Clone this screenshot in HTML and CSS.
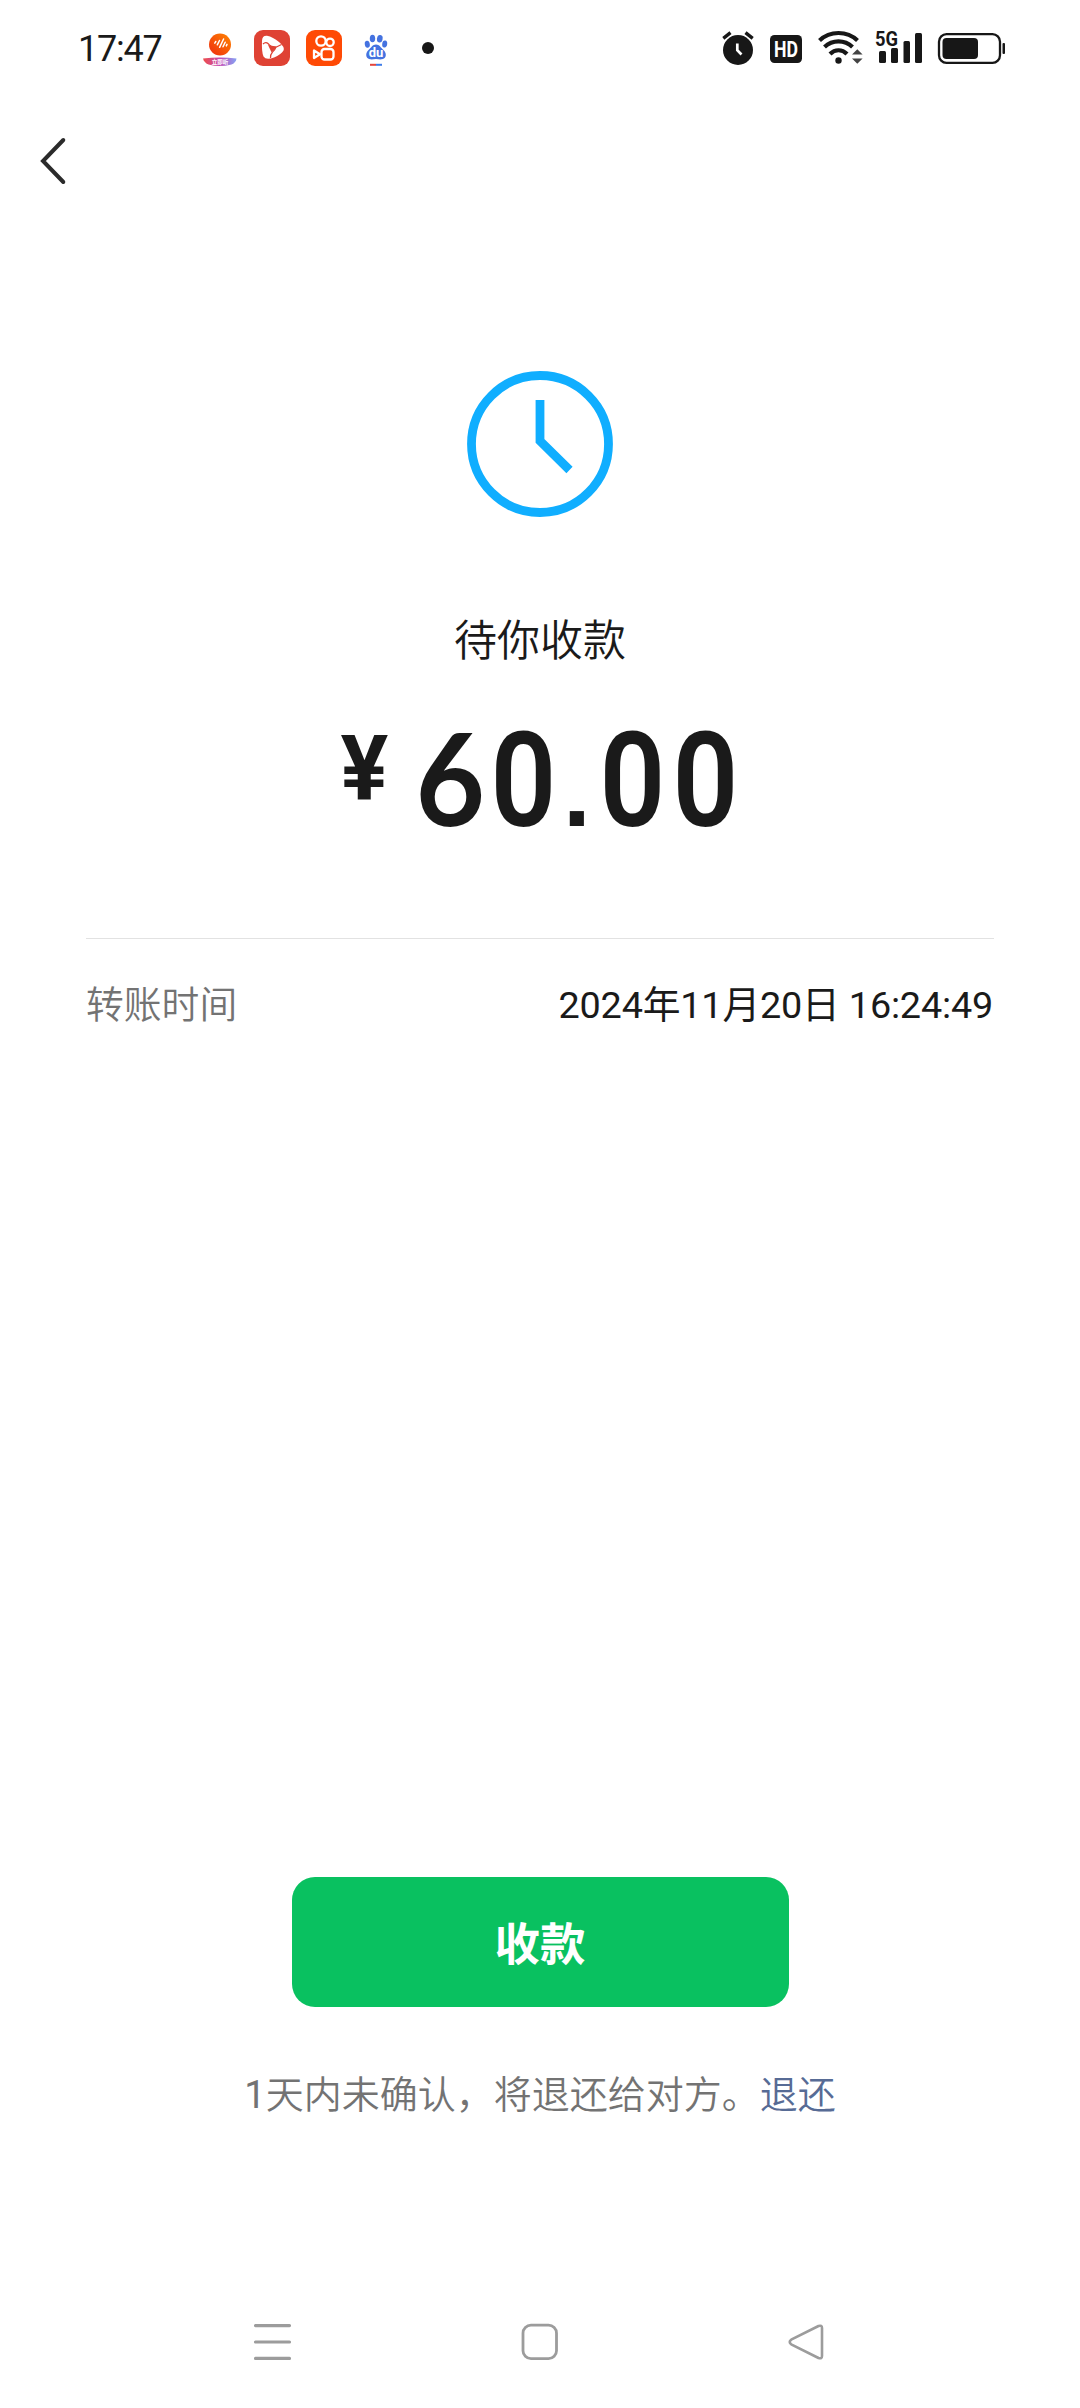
FILE: index.html
```html
<!DOCTYPE html>
<html lang="zh-CN">
<head>
<meta charset="utf-8">
<title>待你收款</title>
<link rel="stylesheet" href="styles.css">
</head>
<body>
<div class="screen">
  <header class="status">
    <div class="status-left">
      <span class="time">17:47</span>
      <div class="apps">
        <svg width="36" height="40" viewBox="202 28 36 40">
          <defs>
            <linearGradient id="ball" x1="1" y1="0" x2="0" y2="1"><stop offset="0" stop-color="#ff8500"/><stop offset="1" stop-color="#ee2c10"/></linearGradient>
            <linearGradient id="ribbon"><stop offset="0" stop-color="#f04d48"/><stop offset=".5" stop-color="#c24bb5"/><stop offset="1" stop-color="#85a3f5"/></linearGradient>
          </defs>
          <circle cx="220" cy="44.5" r="11" fill="url(#ball)"/>
          <path d="M214.800 43.200l1-1.700M217.300 44.800l2.200-4.300M219.600 47.300l4-8.300M223 46.800l2.200-4.600M226.300 45.900l.7-1.500" stroke="#fff" stroke-width="1.500" stroke-linecap="round" fill="none"/>
          <path d="M203 58.5q17-1.8 33.500 0q-.5 4-5 6q-11.500 3-23 0q-4.500-2-5.500-6z" fill="url(#ribbon)"/>
          <text x="220" y="64" class="ribbon-text">立即听</text>
        </svg>
        <svg width="36" height="40" viewBox="254 28 36 40">
          <rect x="254" y="30" width="36" height="36" rx="9" fill="#df4234"/>
          <path d="M262 41Q262 35.500 267 35.800Q273 37 279 42Q285 47 283.500 50.500Q281 54.500 274 57.500Q266 60.500 263.500 56.500Q261.500 52 262 41z" fill="#fff"/>
          <path d="M263 44q3-3 6 .5q2.500 3.500 7.500 2.500l5-2.500M276 47q-1 3-3.500 5q-2.500 3-2 6" fill="none" stroke="#df4234" stroke-width="1.200"/>
          <path d="M268 45l9 1.800-5.500 5.500z" fill="#df4234"/>
        </svg>
        <svg width="36" height="40" viewBox="306 28 36 40">
          <rect x="306" y="30" width="36" height="36" rx="9" fill="#ff4a05"/>
          <g fill="none" stroke="#fff" stroke-width="2.300" stroke-linejoin="round">
            <circle cx="321" cy="41" r="4.700"/><circle cx="330" cy="42.300" r="3.700"/>
            <rect x="321.500" y="49" width="12" height="10.500" rx="3"/>
            <path d="M314 50.500v7.500l6-3.800z"/>
          </g>
        </svg>
        <svg width="36" height="40" viewBox="358 28 36 40">
          <g fill="#4472e0">
            <ellipse cx="372.500" cy="38.500" rx="2.700" ry="3.800"/><ellipse cx="379.800" cy="38.700" rx="2.800" ry="3.800" transform="rotate(10 379.800 38.700)"/>
            <ellipse cx="367.300" cy="44.300" rx="2.500" ry="3.500" transform="rotate(-10 367.300 44.300)"/><ellipse cx="384.700" cy="44" rx="2.500" ry="3.500" transform="rotate(8 384.700 44)"/>
            <path d="M376 44.500c3.500 0 4.500 3 7.500 5.500c3.500 3 3 8.700-1.500 9.300c-2.500.3-4-.3-6-.3s-3.500.6-6 .3c-4.500-.6-5-6.300-1.500-9.300c3-2.500 4-5.500 7.500-5.500z"/>
          </g>
          <text x="376" y="56.500" class="du-text">du</text>
          <path d="M370 64.800h6" stroke="#e3453c" stroke-width="2"/><path d="M376 64.800h6" stroke="#3f7de8" stroke-width="2"/>
        </svg>
        <svg width="36" height="40" viewBox="410 28 36 40"><circle cx="428" cy="48" r="6" fill="#171717"/></svg>
      </div>
    </div>
    <div class="status-right">
      <svg width="34" height="40" viewBox="722 28 34 40">
        <circle cx="739" cy="50" r="15" fill="#171717"/>
        <path d="M724.300 38.300l7.200-5.600M746.500 32.700l7.200 5.600" stroke="#171717" stroke-width="3.400"/>
        <path d="M738.300 43.500v6.800l4.200 4.200" fill="none" stroke="#fff" stroke-width="2.700"/>
      </svg>
      <svg width="32" height="40" viewBox="771 28 32 40">
        <rect x="771" y="35" width="32" height="28" rx="4.500" fill="#171717"/>
        <text x="775" y="57" class="hd-text" textLength="24" lengthAdjust="spacingAndGlyphs">HD</text>
      </svg>
      <svg width="46" height="40" viewBox="818 28 46 40">
        <g fill="none" stroke="#171717" stroke-width="4.200">
          <path d="M820.500 40.500c10.500-10 27.500-10 38 0"/><path d="M825.500 47c8-7.500 20-7.500 28 0"/><path d="M831 54c5-5 12-5 17 0"/>
        </g>
        <circle cx="839.500" cy="60.500" r="3.200" fill="#171717"/>
        <path d="M853 54.500l5.300-5.200 5.300 5.200zM853 58.500l5.300 5.200 5.300-5.200z" fill="#444"/>
      </svg>
      <svg width="50" height="40" viewBox="875 28 50 40">
        <g fill="#171717"><rect x="880" y="51" width="7" height="12" rx="1.500"/><rect x="892" y="48" width="7" height="15" rx="1.500"/><rect x="904.500" y="41" width="6.500" height="22" rx="1.500"/><rect x="916" y="33" width="7" height="30" rx="1.500"/></g>
        <text x="876" y="46" class="net-text" textLength="23" lengthAdjust="spacingAndGlyphs">5G</text>
      </svg>
      <svg width="68" height="40" viewBox="939 28 68 40">
        <rect x="940" y="34.200" width="61" height="28.600" rx="7.500" fill="none" stroke="#171717" stroke-width="2.300"/>
        <rect x="943.500" y="38" width="35.500" height="21" rx="4" fill="#171717"/>
        <rect x="1003.500" y="43" width="2.500" height="11" rx="1" fill="#171717"/>
      </svg>
    </div>
  </header>

  <nav class="topbar">
    <svg width="28" height="50" viewBox="39 136 28 50"><path d="M63.300 140L43 161l20.300 21" fill="none" stroke="#2b2b2b" stroke-width="4" stroke-linecap="round"/></svg>
  </nav>

  <main class="main">
    <svg class="clock" width="146" height="146" viewBox="0 0 146 146">
      <g fill="none" stroke="#10aeff" stroke-width="8.800"><circle cx="73" cy="73" r="68.500"/><path d="M73 29v41l29.500 29"/></g>
    </svg>
    <h1 class="title">待你收款</h1>
    <div class="amount">
      <span class="yen">¥</span><span class="digit six">6</span><span class="digit">0</span><span class="digit point">.</span><span class="digit">0</span><span class="digit">0</span>
    </div>
    <div class="detail">
      <span class="label">转账时间</span>
      <span class="value">2024年11月20日 16:24:49</span>
    </div>
  </main>

  <footer class="actions">
    <button class="accept">收款</button>
    <p class="note"><span class="days">1</span>天内未确认，将退还给对方。<a class="refund">退还</a></p>
  </footer>

  <div class="sysnav">
    <svg width="40" height="40" viewBox="0 0 40 40"><path d="M3.500 3.600h34M3.500 20h34M3.500 36.400h34" stroke="#9c9c9c" stroke-width="3.200" stroke-linecap="round"/></svg>
    <svg width="40" height="40" viewBox="0 0 40 40"><rect x="3" y="3.200" width="33.500" height="33.500" rx="8" fill="none" stroke="#9c9c9c" stroke-width="2.800"/></svg>
    <svg width="40" height="40" viewBox="0 0 40 40"><path d="M31.500 4L4.200 17.700q-3 2.300 0 4.600L31.500 36q3.500 1.200 3.500-2V6q0-3.200-3.500-2z" fill="none" stroke="#9c9c9c" stroke-width="2.600" stroke-linejoin="round"/></svg>
  </div>
</div>
</body>
</html>
```
FILE: styles.css
```css
* { box-sizing: border-box; }
body {
  margin: 0;
  background: #fff;
  color: #1a1a1a;
  font-family: Roboto, "Noto Sans CJK SC", sans-serif;
}
svg { display: block; flex: none; overflow: visible; }
.screen {
  width: 1080px;
  height: 2408px;
  display: flex;
  flex-direction: column;
}
.status {
  height: 96px;
  padding: 0 74px 0 78px;
  display: flex;
  align-items: center;
  justify-content: space-between;
}
.status-left { display: flex; align-items: center; }
.time { width: 124px; padding-top: 2px; font-size: 36px; letter-spacing: -1.2px; line-height: 40px; }
.apps { display: flex; gap: 16px; }
.status-right { display: flex; align-items: center; }
.status-right svg:nth-child(2) { margin-left: 15px; }
.status-right svg:nth-child(3) { margin-left: 15px; }
.status-right svg:nth-child(4) { margin-left: 11px; }
.status-right svg:nth-child(5) { margin-left: 14px; }
.ribbon-text { font-size: 5.5px; font-weight: 700; fill: #fff; text-anchor: middle; }
.du-text { font: 700 13px Roboto, sans-serif; fill: #fff; text-anchor: middle; }
.hd-text { font: 700 22px Roboto, sans-serif; fill: #fff; }
.net-text { font: 700 20px Roboto, sans-serif; fill: #171717; }

.topbar { height: 130px; padding: 40px 39px; }

.main { display: flex; flex-direction: column; align-items: center; padding: 145px 86px 0; }
.title { margin: 94px 0 0; font-size: 43px; line-height: 60px; font-weight: 350; }
.amount {
  height: 130px;
  margin-top: 40px;
  display: flex;
  justify-content: center;
  align-items: baseline;
  line-height: 130px;
  font-weight: 600;
}
.yen { width: 74px; font-size: 91px; line-height: 104px; font-weight: 700; transform: translate(1.5px, -26px) scaleX(.98); transform-origin: left; }
.digit { width: 73px; font-size: 131px; text-align: center; transform: scaleX(.88); }
.six { font-family: Lato, sans-serif; font-weight: 700; font-size: 129px; transform: scaleX(.93); }
.point { width: 36px; font: 700 100px/130px "Liberation Sans", sans-serif; transform: none; }
.detail {
  align-self: stretch;
  margin-top: 97px;
  padding-top: 38px;
  border-top: 1px solid #e2e2e2;
  display: flex;
  justify-content: space-between;
  font-size: 37.8px;
  line-height: 56px;
}
.label { color: #737373; font-weight: 350; }
.value { letter-spacing: -.2px; padding-right: 1px; }

.actions { margin-top: auto; display: flex; flex-direction: column; align-items: center; }
.accept {
  width: 497px;
  height: 130px;
  padding: 8px 0 0;
  border: 0;
  border-radius: 23px;
  background: #09c160;
  color: #fff;
  font: 700 45.4px/60px Roboto, "Noto Sans CJK SC", sans-serif;
}
.note { margin: 58px 0 0; font-size: 38px; line-height: 60px; color: #737373; font-weight: 350; white-space: nowrap; }
.days { font-weight: 400; }
.refund { color: #576b95; }
.sysnav {
  height: 283px;
  padding: 197px 253px 0 252px;
  display: flex;
  justify-content: space-between;
}
```
